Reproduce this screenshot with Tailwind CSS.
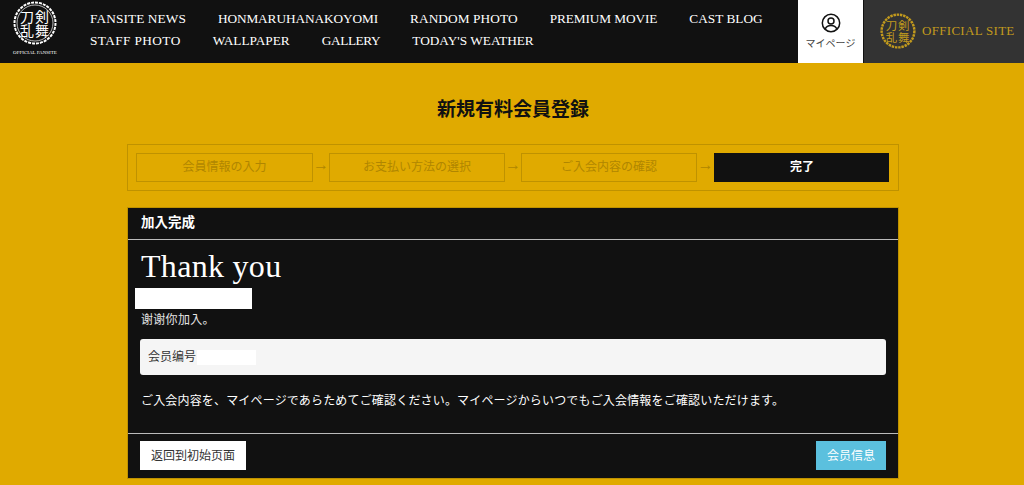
<!DOCTYPE html>
<html lang="ja">
<head>
    <meta charset="UTF-8">
    <title>新規有料会員登録</title>
    <script src="https://cdn.jsdelivr.net/npm/@tailwindcss/browser@4"></script>
</head>
<body class="h-[485px] overflow-hidden bg-[#e0aa00] font-['Liberation_Sans','Noto_Sans_CJK_JP',sans-serif]">

    <!-- ヘッダー -->
    <header class="flex h-[63px] bg-[#111111]">
        <div class="flex w-[70px] shrink-0 flex-col items-center pt-px">
            <svg width="44" height="44" viewBox="0 0 44 44">
                <circle cx="22" cy="22" r="20.500" fill="#111111" stroke="#ffffff" stroke-width="2" stroke-dasharray="3 1"/>
                <circle cx="22" cy="22" r="18" fill="none" stroke="#ffffff" stroke-width="0.700"/>
                <text x="22" y="20.500" fill="#ffffff" font-size="14" letter-spacing="1" text-anchor="middle" font-family="Noto Sans CJK JP">刀剣</text>
                <text x="22" y="35" fill="#ffffff" font-size="14" letter-spacing="1" text-anchor="middle" font-family="Noto Sans CJK JP">乱舞</text>
            </svg>
            <span class="mt-[5px] whitespace-nowrap font-['Liberation_Serif',serif] text-[5px] leading-[6px] text-white">OFFICIAL FANSITE</span>
        </div>
        <nav class="ml-5 flex-1 pt-[8px] font-['Liberation_Serif',serif] text-[13.300px] leading-[22px] text-white">
            <ul class="flex gap-[32px]">
                <li class="tracking-[0.100px]">FANSITE NEWS</li>
                <li class="tracking-[-0.100px]">HONMARUHANAKOYOMI</li>
                <li class="tracking-[0.100px]">RANDOM PHOTO</li>
                <li class="tracking-[-0.100px]">PREMIUM MOVIE</li>
                <li>CAST BLOG</li>
            </ul>
            <ul class="flex gap-[32px]">
                <li class="tracking-[0.400px]">STAFF PHOTO</li>
                <li>WALLPAPER</li>
                <li class="tracking-[-0.400px]">GALLERY</li>
                <li>TODAY'S WEATHER</li>
            </ul>
        </nav>
        <div class="flex w-[65px] shrink-0 flex-col items-center bg-white pt-[13px]">
            <svg width="20" height="20" viewBox="0 0 20 20" fill="none" stroke="#111111" stroke-width="1.500">
                <circle cx="10" cy="10" r="8.700"/>
                <circle cx="10" cy="8" r="3"/>
                <path d="M4.200 16c1-2.600 3-3.600 5.800-3.600s4.800 1 5.800 3.600"/>
            </svg>
            <span class="mt-[4px] text-[10px] leading-[14px] text-[#444444]">マイページ</span>
        </div>
        <div class="ml-px flex w-[160px] shrink-0 items-center bg-[#333333] pb-px pl-[16px] text-[#c29a1d]">
            <svg width="36" height="36" viewBox="0 0 44 44" class="shrink-0">
                <circle cx="22" cy="22" r="20" fill="none" stroke="#c29a1d" stroke-width="3" stroke-dasharray="3 1"/>
                <text x="22" y="20.500" fill="#c29a1d" font-size="14" letter-spacing="1" text-anchor="middle" font-family="Noto Sans CJK JP">刀剣</text>
                <text x="22" y="35" fill="#c29a1d" font-size="14" letter-spacing="1" text-anchor="middle" font-family="Noto Sans CJK JP">乱舞</text>
            </svg>
            <span class="ml-[6px] whitespace-nowrap font-['Liberation_Serif',serif] text-[13px] tracking-[0.300px]">OFFICIAL SITE</span>
        </div>
    </header>

    <main class="ml-[127px] w-[772px]">
        <h1 class="pt-[33px] text-center font-['Liberation_Serif','Noto_Sans_CJK_JP',serif] text-[19px] leading-[28px] font-bold text-[#111111]">新規有料会員登録</h1>

        <!-- ステップ -->
        <div class="mt-[20px] flex h-[47px] items-center border border-[#bf9200] px-[8px] text-[12px]">
            <div class="flex h-[29px] w-[177px] items-center justify-center border border-[#bf9200] pb-px text-[#b08600]">会員情報の入力</div>
            <span class="w-[16px] pb-[6px] text-center text-[16px] text-[#b08600]">→</span>
            <div class="flex h-[29px] w-[176px] items-center justify-center border border-[#bf9200] pb-px text-[#b08600]">お支払い方法の選択</div>
            <span class="w-[16px] pb-[6px] text-center text-[16px] text-[#b08600]">→</span>
            <div class="flex h-[29px] w-[176px] items-center justify-center border border-[#bf9200] pb-px text-[#b08600]">ご入会内容の確認</div>
            <span class="w-[17px] pb-[6px] text-center text-[16px] text-[#b08600]">→</span>
            <div class="flex h-[29px] w-[175px] items-center justify-center bg-[#111111] pb-px pl-px font-bold text-white">完了</div>
        </div>

        <!-- 完了パネル -->
        <section class="mt-[16px] h-[272px] border border-[#bf9200] bg-[#111111] text-white">
            <h2 class="flex h-[32px] items-center border-b border-[#bbbbbb] pl-[13px] text-[13.500px] font-bold">加入完成</h2>
            <div class="h-[193px] px-[12px]">
                <p class="pt-[8px] pl-px font-['Liberation_Serif',serif] text-[32px] leading-[36px] tracking-[0.300px]">Thank you</p>
                <div class="mt-[4px] -ml-[5px] h-[21px] w-[117px] bg-white"></div>
                <p class="mt-[3px] pl-px text-[12px] leading-[17px] tracking-[0.300px] text-[#e5e5e5]">谢谢你加入。</p>
                <div class="mt-[10px] flex h-[36px] items-center rounded-[3px] bg-[#f5f5f5] pl-[8px] text-[12px] text-[#333333]">
                    会员编号
                    <span class="ml-px h-[15px] w-[59px] bg-white"></span>
                </div>
                <p class="mt-[17px] pl-px text-[12px] leading-[18px] tracking-[0.170px]">ご入会内容を、マイページであらためてご確認ください。マイページからいつでもご入会情報をご確認いただけます。</p>
            </div>
            <div class="flex h-[45px] items-center justify-between border-t border-[#bbbbbb] px-[12px] pb-px">
                <a class="flex h-[29px] w-[106px] items-center justify-center bg-white text-[12px] text-[#333333]">返回到初始页面</a>
                <a class="flex h-[29px] w-[70px] items-center justify-center bg-[#5bc0de] text-[12px] text-white">会员信息</a>
            </div>
        </section>
    </main>
</body>
</html>
